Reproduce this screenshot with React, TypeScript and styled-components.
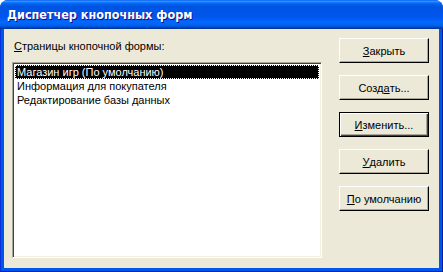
import React from "react";
import styled, { createGlobalStyle } from "styled-components";

const GlobalStyle = createGlobalStyle`
  html, body {
    margin: 0;
    padding: 0;
    background: #ffffff;
  }
  body {
    width: 443px;
    height: 272px;
    overflow: hidden;
  }
`;

const Window = styled.div`
  width: 443px;
  height: 272px;
  display: flex;
  flex-direction: column;
  border-radius: 8px 8px 0 0;
  overflow: hidden;
  background: #0055ea;
  font-family: "Liberation Sans", Arial, sans-serif;
  font-size: 11px;
  color: #000;
`;

const TitleBar = styled.div`
  height: 29px;
  flex: none;
  display: flex;
  align-items: center;
  padding: 0 0 1px 7px;
  box-sizing: border-box;
  background: linear-gradient(
    180deg,
    #0058ee 0%,
    #3a93ff 4%,
    #288eff 6%,
    #127dff 8%,
    #036ffc 10%,
    #0262ee 14%,
    #0057e5 20%,
    #0054e3 24%,
    #0055eb 56%,
    #005bf5 66%,
    #026afe 76%,
    #0062ef 86%,
    #0052d6 92%,
    #0040ab 96%,
    #003092 100%
  );
`;

const Title = styled.span`
  font-family: "DejaVu Sans Condensed", "DejaVu Sans", sans-serif;
  font-stretch: condensed;
  font-weight: bold;
  font-size: 12.5px;
  color: #fff;
  text-shadow: 1px 1px #0f1089;
  white-space: nowrap;
`;

const Frame = styled.div`
  flex: 1;
  display: flex;
  padding: 0 4px 4px 4px;
  background: #0055ea;
  box-shadow: inset 1px 0 #0831d9, inset -1px 0 #001ea0, inset 0 -1px #001ea0;
`;

const Client = styled.div`
  flex: 1;
  display: grid;
  grid-template-columns: 310px 90px;
  column-gap: 17px;
  padding: 0 10px 0 8px;
  background: #ece9d8;
`;

const LeftColumn = styled.div`
  display: flex;
  flex-direction: column;
  padding-top: 11px;
`;

const Label = styled.div`
  line-height: 13px;
  padding-left: 2px;
  margin-bottom: 9px;
  white-space: nowrap;
`;

const Key = styled.span`
  text-decoration: underline;
`;

const ListBox = styled.div`
  height: 196px;
  box-sizing: border-box;
  background: #fff;
  border-style: solid;
  border-width: 1px;
  border-color: #aca899 #fff #fff #aca899;
  box-shadow: inset 1px 1px #404040, inset -1px -1px #f1efe2;
  padding: 2px 2px 0 2px;
`;

const Item = styled.div<{ $selected?: boolean }>`
  height: 14px;
  line-height: 12px;
  box-sizing: border-box;
  padding-left: 1px;
  white-space: nowrap;
  border: 1px dotted ${(p) => (p.$selected ? "#ffffff" : "transparent")};
  background: ${(p) => (p.$selected ? "#000" : "transparent")};
  color: ${(p) => (p.$selected ? "#fff" : "#000")};
`;

const RightColumn = styled.div`
  display: flex;
  flex-direction: column;
  gap: 12px;
  padding-top: 9px;
`;

const Button = styled.div<{ $default?: boolean }>`
  height: 25px;
  box-sizing: border-box;
  display: flex;
  align-items: center;
  justify-content: center;
  background: #ece9d8;
  border-style: solid;
  border-width: 1px;
  border-color: ${(p) => (p.$default ? "#000 #000 #000 #000" : "#fff #000 #000 #fff")};
  box-shadow: ${(p) =>
    p.$default
      ? "inset 1px 1px #fff, inset -1px -1px #404040, inset -2px -2px #aca899"
      : "inset -1px -1px #aca899"};
  white-space: nowrap;
`;

const items = [
  "Магазин игр (По умолчанию)",
  "Информация для покупателя",
  "Редактирование базы данных",
];

export default function App() {
  return (
    <>
      <GlobalStyle />
      <Window>
        <TitleBar>
          <Title>Диспетчер кнопочных форм</Title>
        </TitleBar>
        <Frame>
          <Client>
            <LeftColumn>
              <Label>
                <Key>С</Key>траницы кнопочной формы:
              </Label>
              <ListBox>
                {items.map((text, i) => (
                  <Item key={text} $selected={i === 0}>
                    {text}
                  </Item>
                ))}
              </ListBox>
            </LeftColumn>
            <RightColumn>
              <Button>
                <Key>З</Key>акрыть
              </Button>
              <Button>
                Созд<Key>а</Key>ть...
              </Button>
              <Button $default>
                <Key>И</Key>зменить...
              </Button>
              <Button>
                <Key>У</Key>далить
              </Button>
              <Button>
                <Key>П</Key>о умолчанию
              </Button>
            </RightColumn>
          </Client>
        </Frame>
      </Window>
    </>
  );
}
